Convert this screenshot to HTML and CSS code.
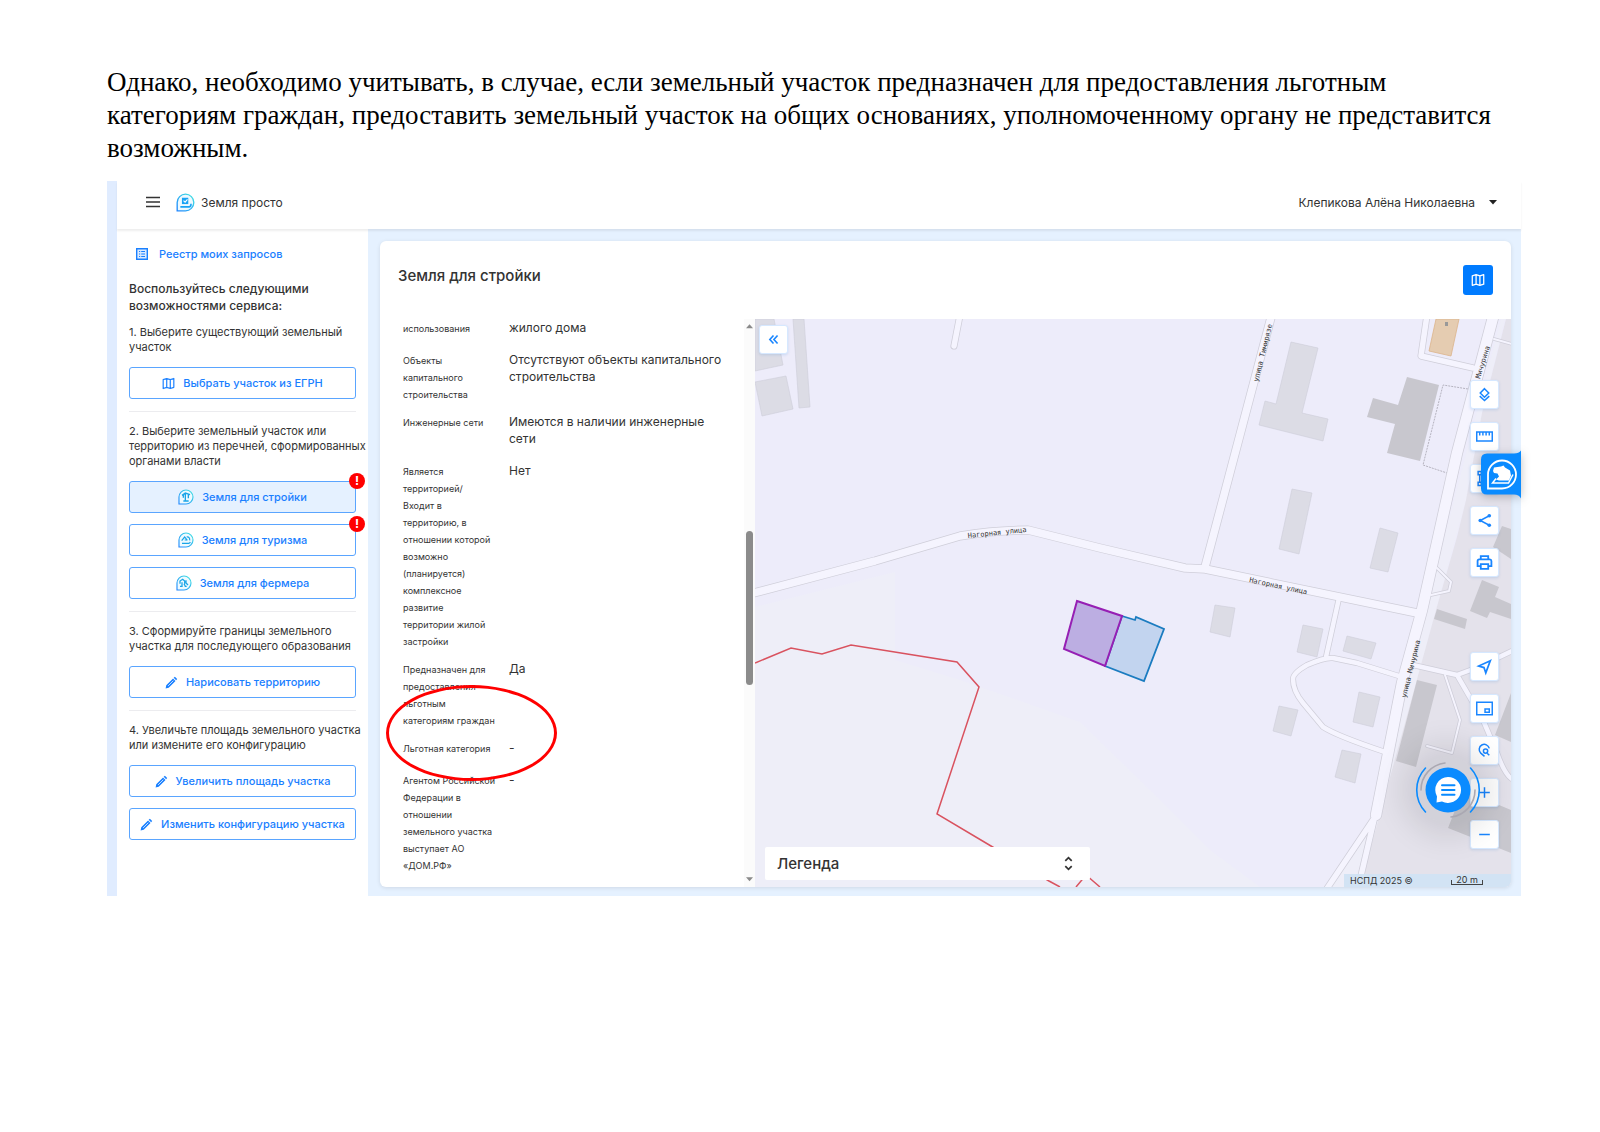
FILE: index.html
```html
<!DOCTYPE html>
<html lang="ru">
<head>
<meta charset="utf-8">
<meta name="viewport" content="width=device-width, initial-scale=1">
<title>Земля просто</title>
<link rel="stylesheet" href="styles.css">
</head>
<body>
<svg class="defs" aria-hidden="true">
  <defs>
    <linearGradient id="drop" x1="0" y1="1" x2="1" y2="0">
      <stop offset="0" stop-color="#1f86ff"/><stop offset="1" stop-color="#45e6e0"/>
    </linearGradient>
    <symbol id="i-map" viewBox="1 1 22 22"><path d="M3 5.500 9 3.500l6 2 6-2v15l-6 2-6-2-6 2zM9 3.500v15M15 5.500v15" fill="none" stroke="currentColor" stroke-width="2" stroke-linejoin="round"/></symbol>
    <symbol id="i-pen" viewBox="2 1 21 21"><path d="M3 21l1-5L15 5l4 4L8 20zM16 4l2-1.700 3.700 3.700L20 8z" fill="currentColor"/><path d="M7 17 15.500 8.500" stroke="#fff" stroke-width="1.200"/></symbol>
    <symbol id="i-drop" viewBox="0 0 24 24"><path d="M1.500 22.500V12A10.500 10.500 0 1 1 12 22.500z" fill="#eefaff" stroke="url(#drop)" stroke-width="1.700"/></symbol>
  </defs>
</svg>

<main class="page">
  <p class="note">Однако, необходимо учитывать, в случае, если земельный участок предназначен для предоставления льготным категориям граждан, предоставить земельный участок на общих основаниях, уполномоченному органу не представится возможным.</p>

  <section class="app">
    <header class="topbar">
      <button class="menu" type="button" aria-label="Меню"><svg viewBox="0 0 14 12"><path d="M0 1.500h14M0 6h14M0 10.500h14" stroke="#333" stroke-width="1.400"/></svg></button>
      <a class="brand" href="#">
        <svg viewBox="0 0 24 24"><use href="#i-drop"/><path d="M7.500 6h8v8h-8z" fill="#19a3f5"/><path d="M9.500 9.500l2 2 3-3.500" stroke="#fff" stroke-width="1.400" fill="none"/><path d="M5.500 17.500h11c1.500 0 2.500-1.500 2.500-4" stroke="#19a3f5" stroke-width="2" fill="none"/></svg>
        <span>Земля просто</span>
      </a>
      <button class="user" type="button">Клепикова Алёна Николаевна <svg viewBox="0 0 8 5"><path d="M0 0h8L4 4.500z" fill="#222"/></svg></button>
    </header>

    <div class="body">
      <nav class="side">
        <a class="registry" href="#"><svg viewBox="0 0 12 12"><path d="M.700.700h10.600v10.600H.700z" fill="#dcebff" stroke="currentColor" stroke-width="1.400"/><path d="M3 3.500h1.200M3 6h1.200M3 8.500h1.200M5.200 3.500H9M5.200 6H9M5.200 8.500H9" stroke="currentColor" stroke-width="1.100"/></svg>Реестр моих запросов</a>
        <h2>Воспользуйтесь следующими возможностями сервиса:</h2>

        <section class="step">
          <p>1. Выберите существующий земельный участок</p>
          <button class="act" type="button"><svg class="ico"><use href="#i-map"/></svg>Выбрать участок из ЕГРН</button>
        </section>
        <section class="step">
          <p>2. Выберите земельный участок или территорию из перечней, сформированных органами власти</p>
          <button class="act active" type="button"><svg class="ico big" viewBox="0 0 24 24"><use href="#i-drop"/><path d="M11 18V7M6 9.500 11 6l7 2.500M15.500 8.500V14M8 18h8M8 13V9" stroke="#1aa5e8" stroke-width="2" fill="none"/></svg>Земля для стройки<span class="alert">!</span></button>
          <button class="act" type="button"><svg class="ico big" viewBox="0 0 24 24"><use href="#i-drop"/><path d="M5.500 13 10 7.500l4 5M13 7.500c3-1 5 1.500 4.500 5M10 12h4M6 17h10c1 0 2-.700 2.500-2" stroke="#1aa5e8" stroke-width="1.800" fill="none"/></svg>Земля для туризма<span class="alert">!</span></button>
          <button class="act" type="button"><svg class="ico big" viewBox="0 0 24 24"><use href="#i-drop"/><path d="M6 13V9l4-2.500L13 9v4M15 8v4l3 3M6 17h4M13 17h3M9 11v5M12 13l2 4" stroke="#1aa5e8" stroke-width="1.900" fill="none"/></svg>Земля для фермера</button>
        </section>
        <section class="step">
          <p>3. Сформируйте границы земельного участка для последующего образования</p>
          <button class="act" type="button"><svg class="ico"><use href="#i-pen"/></svg>Нарисовать территорию</button>
        </section>
        <section class="step">
          <p>4. Увеличьте площадь земельного участка или измените его конфигурацию</p>
          <button class="act" type="button"><svg class="ico"><use href="#i-pen"/></svg>Увеличить площадь участка</button>
          <button class="act" type="button"><svg class="ico"><use href="#i-pen"/></svg>Изменить конфигурацию участка</button>
        </section>
      </nav>

      <div class="workspace">
        <article class="card">
          <header class="card-head">
            <h1>Земля для стройки</h1>
            <button class="map-toggle" type="button" aria-label="Карта"><svg><use href="#i-map"/></svg></button>
          </header>
          <div class="split">
            <div class="details">
              <table>
                <tr><th scope="row">использования</th><td>жилого дома</td></tr>
                <tr><th scope="row">Объекты капитального строительства</th><td>Отсутствуют объекты капитального строительства</td></tr>
                <tr><th scope="row">Инженерные сети</th><td>Имеются в наличии инженерные сети</td></tr>
                <tr><th scope="row">Является территорией/<br>Входит в<br>территорию, в отношении которой возможно (планируется) комплексное развитие<br>территории жилой застройки</th><td>Нет</td></tr>
                <tr><th scope="row">Предназначен для предоставления льготным<br>категориям граждан</th><td>Да</td></tr>
                <tr><th scope="row">Льготная категория</th><td>-</td></tr>
                <tr><th scope="row">Агентом Российской Федерации в отношении<br>земельного участка выступает АО «ДОМ.РФ»</th><td>-</td></tr>
              </table>
              <div class="scroll" aria-hidden="true">
                <svg viewBox="0 0 8 5"><path d="M0 4.500h8L4 0z" fill="#8a8a8a"/></svg>
                <div class="rail"><div class="thumb"></div></div>
                <svg viewBox="0 0 8 5"><path d="M0 0h8L4 4.500z" fill="#8a8a8a"/></svg>
              </div>
              <div class="mark"></div>
            </div>

            <div class="map">
              <svg class="canvas" viewBox="755 319 756 568" preserveAspectRatio="xMinYMin slice" role="img" aria-label="Карта участка">
                <path fill="#edecfa" d="M755 319h756v568H755z"/>
                <path fill="#eeeef8" d="M755 607 895 572v88l65 20 120 42 80 78 50 50 50 37H755z"/>
                <path fill="#eeeef8" d="M1505 319 1482 413l-16 87-28 103-66 247-12 37h-35l46-67 130-501z"/>
                <path fill="#e4e2eb" d="M1506 319 1482 413l-16 87-9 37-19 66-68 247-10 37h151V319z"/>
                <g fill="#dcdce5" stroke="#cdcdd8" stroke-width=".6">
                  <path d="M755 319h19l9 46-28 6zM755 382l31-6 7 33-31 7zM793 319h11l6 88-11 1z"/>
                  <path d="M1291 342l27 6-16 65 26 6-5 22-64-16 6-24 11 3zM1292 489l20 4-13 61-20-5zM1380 528l18 5-10 39-18-4z"/>
                  <path d="M1215 605l20 3-5 29-20-5zM1303 625l20 4-6 28-20-5zM1347 636l29 7-5 16-28-8zM1359 692l21 5-7 30-20-5zM1279 706l19 4-7 26-18-5zM1342 750l19 4-6 29-20-6z"/>
                </g>
                <g fill="#c8c7ce">
                  <path d="M1407 377l32 8-19 76-33-8 8-29-28-7 6-19 25 7zM1417 680l20 5-21 82-20-6zM1437 609l30 10-2 10-31-10zM1482 580l17 7-4 10 16 7v15l-21-7-3 6-17-7zM1511 693v49l-16-7zM1463 790l48 20v43l-63-25zM1502 526l9 3v30l-18-12z"/>
                </g>
                <path fill="#e5ccb1" stroke="#dcb48a" stroke-width=".8" d="M1436 319h23l-8 37-22-5z"/>
                <path fill="#999" d="M1445 322h3v4h-3z"/>
                <path d="M1468 389l-25-4-20 80 24 8" fill="none" stroke="#b5b3bf" stroke-dasharray="2 1"/>
                <g fill="none" stroke-linejoin="round" stroke-linecap="round">
                  <g stroke="#cfced9">
                    <path stroke-width="3.500" d="M1494 339l18 5M1437 568l14 14-2 9-18 4M1445 675l15 45-8 33-25-7"/>
                    <path stroke-width="6" d="M1339 598l-13 59M1402 677l-45-14-24-5q-8-1-26 7-14 8-14 14 0 12 10 24l20 24q14 9 62 25M1413 665l44 10 19-7 36-17M1457 675l26 45 14 33q8 22 15 26"/>
                    <path stroke-width="7" d="M960 315l-6 31M1427 315l-6 41 52 12M1373 820l-47 70M1374 820l-14 60"/>
                    <path stroke-width="9" d="M750 594l125-33 85-25q35-6 68-6l72 18 85 20 20 1 212 44M1273 310l-68 257"/>
                    <path stroke-width="12" d="M1495 310l-38 143-35 157-20 73-26 132"/>
                  </g>
                  <g stroke="#f5f4fe">
                    <path stroke-width="2" d="M1494 339l18 5M1437 568l14 14-2 9-18 4M1445 675l15 45-8 33-25-7"/>
                    <path stroke-width="4.500" d="M1339 598l-13 59M1402 677l-45-14-24-5q-8-1-26 7-14 8-14 14 0 12 10 24l20 24q14 9 62 25M1413 665l44 10 19-7 36-17M1457 675l26 45 14 33q8 22 15 26"/>
                    <path stroke-width="5.500" d="M960 315l-6 31M1427 315l-6 41 52 12M1373 820l-47 70M1374 820l-14 60"/>
                    <path stroke-width="7.500" d="M750 594l125-33 85-25q35-6 68-6l72 18 85 20 20 1 212 44M1273 310l-68 257"/>
                    <path stroke-width="10.500" d="M1495 310l-38 143-35 157-20 73-26 132"/>
                  </g>
                </g>
                <path d="M755 663l36-15 31 6 29-9 106 17 22 25-42 127 54 32 58 35 11 6M1076 887l10-12 14 12" fill="none" stroke="#d9525f" stroke-width="1.500"/>
                <path d="M1122 616l13 4 1-3 28 12-20 52-39-15z" fill="#c2d4ef" stroke="#1b7cc0" stroke-width="1.800"/>
                <path d="M1077 601l45 15-17 50-41-17z" fill="#bcaee2" stroke="#961fb4" stroke-width="2"/>
                <g class="street">
                  <text transform="translate(968 538) rotate(-6)">Нагорная улица</text>
                  <text transform="translate(1249 582) rotate(12)">Нагорная улица</text>
                  <text transform="translate(1258 382) rotate(-76)">улица Тимирязе</text>
                  <text transform="translate(1480 379) rotate(-73)">Мичурина</text>
                  <text transform="translate(1406 698) rotate(-76)">улица Мичурина</text>
                </g>
              </svg>

              <button class="tool collapse" type="button" aria-label="Свернуть"><svg viewBox="0 0 16 16"><path d="M8 3 3.500 8 8 13M13 3 8.500 8l4.500 5" stroke-width="2"/></svg></button>

              <div class="tools">
                <button class="tool" type="button" aria-label="Слои"><svg viewBox="0 0 16 16"><path d="M8 2.500 12 6.500 8 10.500 4 6.500zM3.500 9.500 8 13.700l4.500-4.200"/></svg></button>
                <button class="tool" type="button" aria-label="Линейка"><svg viewBox="0 0 16 16"><path d="M.700 3.700h14.600v8.600H.700zM3.500 4v3M6.500 4v3M9.500 4v3M12.500 4v3"/></svg></button>
                <button class="tool" type="button" aria-label="Связи"><svg viewBox="0 0 16 16"><path d="M2 1.500h3v3H2zM2 11.500h3v3H2zM3.500 4.500v7M9 1.500h3v3H9zM9 11.500h3v3H9z"/></svg></button>
                <button class="tool" type="button" aria-label="Поделиться"><svg viewBox="0 0 16 16"><path d="M12.500 3.500 4 8l8.500 4.500"/><g fill="currentColor" stroke="none"><circle cx="12.500" cy="3.500" r="1.700"/><circle cx="4" cy="8" r="1.700"/><circle cx="12.500" cy="12.500" r="1.700"/></g></svg></button>
                <button class="tool" type="button" aria-label="Печать"><svg viewBox="0 0 16 16"><path d="M4.500 5V2h7v3M4 11.500H1.500V6.500Q1.500 5 3 5h10q1.500 0 1.500 1.500v5H12M4.500 9.500h7V14h-7z" stroke-width="1.700"/></svg></button>
                <div class="spacer"></div>
                <button class="tool" type="button" aria-label="Моё местоположение"><svg viewBox="0 0 16 16"><path d="M13.500 2.500 2.500 7.500l5 1.500 1.700 5z" stroke-width="1.600"/></svg></button>
                <button class="tool" type="button" aria-label="Обзорная карта"><svg viewBox="0 0 16 16"><path d="M.700 2.200h14.600v11.600H.700z"/><path d="M8.500 8.500h4v3h-4z"/></svg></button>
                <button class="tool" type="button" aria-label="Поиск на карте"><svg viewBox="0 0 16 16"><path d="M12.500 6A4.800 4.800 0 1 0 4.500 10.500L8 13.500M12.500 12.500l-2-2"/><circle cx="9" cy="8.500" r="2"/></svg></button>
                <button class="tool" type="button" aria-label="Приблизить"><svg viewBox="0 0 16 16"><path d="M8 3v10M3 8h10"/></svg></button>
                <button class="tool" type="button" aria-label="Отдалить"><svg viewBox="0 0 16 16"><path d="M3 8h10"/></svg></button>
              </div>

              <button class="legend" type="button">Легенда<svg viewBox="0 0 10 14"><path d="M2 4.500l3-3 3 3M2 9.500l3 3 3-3" fill="none" stroke="#333" stroke-width="1.600"/></svg></button>
              <div class="credits"><span>НСПД 2025 ©</span><span class="scale">20 m</span></div>

              <button class="chat" type="button" aria-label="Чат">
                <svg viewBox="0 0 66 66">
                  <circle cx="33" cy="33" r="22.500" fill="#0a8bff"/>
                  <path d="M33 20a13 13 0 1 1-6 24.500l-5.500 1 .500-6A13 13 0 0 1 33 20z" fill="#fff"/>
                  <path d="M27 28.300h12.500M27 33h12.500M27 37.700h12.500" stroke="#0a8bff" stroke-width="2" stroke-linecap="round"/>
                  <g fill="none" stroke-linecap="round"><path d="M10.500 11a32 32 0 0 0 0 44M55.500 11a32 32 0 0 1 0 44" stroke="#0a8bff" stroke-width="1.600"/><path d="M6 33A27 27 0 0 1 30 6M60 33A27 27 0 0 1 36 60" stroke="#aaa8b2" stroke-width="1.600"/></g>
                </svg>
              </button>
            </div>
          </div>
        </article>
      </div>
    </div>

    <button class="helper" type="button" aria-label="Помощник">
      <svg viewBox="0 0 40 48"><path d="M40 0Q38 3 33 3H6Q0 3 0 9v29q0 6 6 6h27q5 0 7 4z" fill="#0a8bff"/><path d="M7 38V24a14 14 0 1 1 14 14z" fill="none" stroke="#fff" stroke-width="1.800"/><path d="M13 17l7-1 2.500-1 1.500 2 5 3 1 5-2 5H18l-3-1 3-3-1.500-3-3.500-.500-1-2z" fill="#fff"/><path d="M15 28l-3.500 4.500H27.500L32 24" fill="none" stroke="#fff" stroke-width="1.500"/></svg>
    </button>
  </section>
</main>
</body>
</html>
```

FILE: styles.css
```css
* { box-sizing: border-box; }

body {
  margin: 0;
  background: #fff;
  color: #333;
  font-family: Inter, "Liberation Sans", sans-serif;
}

button {
  margin: 0;
  padding: 0;
  border: 0;
  background: none;
  color: inherit;
  font: inherit;
  cursor: pointer;
}

a { color: inherit; text-decoration: none; }
h1, h2, p { margin: 0; }
svg { display: block; flex: none; }

.defs { position: absolute; width: 0; height: 0; }

.page { padding: 66px 79px 66px 107px; }

.note {
  padding: 0 10px 16px 0;
  color: #000;
  font-family: "Liberation Serif", "Times New Roman", serif;
  font-size: 27px;
  line-height: 33px;
}

/* application frame */
.app {
  position: relative;
  display: flex;
  flex-direction: column;
  border-left: 10px solid #e0ecff;
  background: #e5f1ff;
}

.topbar {
  position: relative;
  display: flex;
  align-items: center;
  height: 48px;
  padding: 0 24px 6px 29px;
  background: #fff;
  box-shadow: 0 2px 2px #00000012;
  font-size: 12px;
}

.menu svg { width: 14px; height: 12px; }
.brand { display: flex; align-items: center; gap: 6px; margin-left: 16px; }
.brand svg { width: 19px; height: 19px; }
.user { display: flex; align-items: center; gap: 14px; margin-left: auto; }
.user svg { width: 8px; height: 5px; }

.body { display: flex; }

/* sidebar */
.side {
  flex: none;
  width: 251px;
  padding: 16px 12px 0;
  background: #fff;
}

.registry {
  display: flex;
  align-items: center;
  gap: 11px;
  height: 18px;
  margin-bottom: 17px;
  padding-left: 7px;
  color: #1a80ff;
  font-size: 11px;
  font-weight: 500;
}

.registry svg { width: 12px; height: 12px; }

.side h2 {
  margin-bottom: 11px;
  font-size: 12px;
  font-weight: 500;
  line-height: 17px;
}

.step { display: flex; flex-direction: column; gap: 11px; }
.step + .step { margin-top: 12px; padding-top: 12px; border-top: 1px solid #ececef; }
.step p { margin: 0 -12px 1px 0; font-size: 11px; line-height: 15px; }

.act {
  position: relative;
  display: flex;
  align-items: center;
  justify-content: center;
  gap: 8px;
  height: 32px;
  border: 1px solid #5aa5ff;
  border-radius: 3px;
  background: #fff;
  color: #1a80ff;
  font-size: 11px;
  font-weight: 500;
}

.act.active { background: #e5f1ff; }
.ico { width: 13px; height: 13px; }
.ico.big { width: 16px; height: 16px; }

.alert {
  position: absolute;
  top: -9px;
  right: -10px;
  width: 16px;
  height: 16px;
  border-radius: 50%;
  background: #f00;
  color: #fff;
  font-size: 12px;
  font-weight: 700;
  line-height: 16px;
  text-align: center;
}

/* card */
.workspace { flex: 1; min-width: 0; padding: 12px 10px 9px 12px; }

.card {
  overflow: hidden;
  border-radius: 6px;
  background: #fff;
  box-shadow: 0 1px 4px #0000001a;
}

.card-head {
  display: flex;
  align-items: flex-start;
  justify-content: space-between;
  padding: 24px 18px;
}

.card-head h1 { font-size: 15px; font-weight: 500; line-height: 21px; }

.map-toggle {
  display: grid;
  place-items: center;
  width: 30px;
  height: 30px;
  border-radius: 3px;
  background: #007bff;
  color: #fff;
}

.map-toggle svg { width: 14px; height: 14px; }

.split { display: flex; }

.details {
  position: relative;
  display: flex;
  flex: none;
  justify-content: space-between;
  width: 375px;
  padding-left: 23px;
}

.details table { border-spacing: 0; align-self: flex-start; width: 330px; table-layout: fixed; }
.details th, .details td { text-align: left; vertical-align: top; line-height: 17px; font-weight: 400; }
.details th { width: 106px; padding: 1px 8px 10px 0; font-size: 9px; }
.details td { padding: 0 0 15px; font-size: 12px; }

.scroll {
  display: flex;
  flex-direction: column;
  align-items: center;
  justify-content: space-between;
  width: 11px;
  padding: 5px 0;
  background: #fbfbfb;
}

.scroll svg { width: 7px; height: 5px; }
.rail { flex: 1; padding-top: 202px; }
.thumb { width: 7px; height: 154px; border-radius: 4px; background: #8b8b8b; }

.mark {
  position: absolute;
  top: 366px;
  left: 6px;
  width: 171px;
  height: 96px;
  border: 3px solid #f00;
  border-radius: 50%;
}

/* map */
.map { position: relative; flex: 1; min-width: 0; min-height: 568px; overflow: hidden; }
.canvas { position: absolute; width: 100%; height: 100%; }
.street { fill: #333; font: 7px "DejaVu Sans Mono", monospace; }

.tool {
  display: grid;
  place-items: center;
  width: 29px;
  height: 29px;
  border: 1px solid #d6e8ff;
  border-radius: 3px;
  background: #fff;
  color: #1a86ff;
  box-shadow: 0 1px 3px #0066cc26;
}

.tool svg {
  width: 17px;
  height: 17px;
  fill: none;
  stroke: currentColor;
  stroke-width: 1.4;
}

.collapse { position: absolute; top: 6px; left: 4px; }
.collapse svg { width: 13px; height: 13px; }

.tools {
  position: absolute;
  top: 61px;
  right: 12px;
  display: flex;
  flex-direction: column;
  gap: 13px;
}

.tools .tool svg { overflow: visible; }
.spacer { height: 49px; }

.legend {
  position: absolute;
  bottom: 7px;
  left: 10px;
  display: flex;
  align-items: center;
  justify-content: space-between;
  width: 325px;
  height: 33px;
  padding: 0 16px 0 12px;
  border-radius: 2px;
  background: #fff;
  font-size: 15px;
  font-weight: 500;
}

.legend svg { width: 11px; height: 15px; }

.credits {
  position: absolute;
  right: 0;
  bottom: 0;
  display: flex;
  justify-content: space-between;
  width: 167px;
  height: 13px;
  padding: 0 28px 0 6px;
  background: #d2e3f4;
  font-size: 9px;
  line-height: 13px;
}

.scale {
  width: 32px;
  height: 11px;
  border: 1px solid #444;
  border-top: 0;
  border-image: linear-gradient(transparent 60%, #444 60%) 1;
  text-align: center;
  line-height: 12px;
}

.chat {
  position: absolute;
  right: 30px;
  bottom: 64px;
  width: 66px;
  height: 66px;
  border-radius: 50%;
  background: #00000012;
  box-shadow: 0 0 30px 14px #00000018;
}

.helper {
  position: absolute;
  top: 269px;
  right: 0;
  width: 40px;
  height: 49px;
  filter: drop-shadow(0 2px 5px #00000040);
}

.helper svg, .chat svg { width: 100%; height: 100%; }
```
